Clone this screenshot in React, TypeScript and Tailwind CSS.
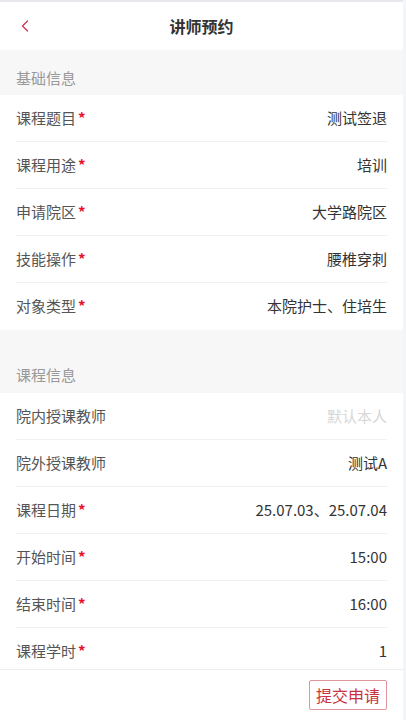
import { ChevronLeft } from 'lucide-react';

type Row = { label: string; value: string; required?: boolean; placeholder?: boolean };

const basic: Row[] = [
  { label: '课程题目', value: '测试签退', required: true },
  { label: '课程用途', value: '培训', required: true },
  { label: '申请院区', value: '大学路院区', required: true },
  { label: '技能操作', value: '腰椎穿刺', required: true },
  { label: '对象类型', value: '本院护士、住培生', required: true },
];

const course: Row[] = [
  { label: '院内授课教师', value: '默认本人', placeholder: true },
  { label: '院外授课教师', value: '测试A' },
  { label: '课程日期', value: '25.07.03、25.07.04', required: true },
  { label: '开始时间', value: '15:00', required: true },
  { label: '结束时间', value: '16:00', required: true },
  { label: '课程学时', value: '1', required: true },
];

function FormRow({ row, last }: { row: Row; last?: boolean }) {
  return (
    <div className="px-4 bg-white">
      <div
        className={`flex items-center justify-between h-[47px] ${
          last ? '' : 'border-b border-[#f0f0f0]'
        }`}
      >
        <div className="flex items-start text-[15px] text-[#555]">
          <span>{row.label}</span>
          {row.required && (
            <span className="text-[#e8112d] text-[15px] font-bold leading-none ml-[2px] mt-[3px]">*</span>
          )}
        </div>
        <span className={`text-[15px] ${row.placeholder ? 'text-[#d6d6d6]' : 'text-[#333]'}`}>{row.value}</span>
      </div>
    </div>
  );
}

export default function App() {
  return (
    <div
      className="w-[406px] h-[720px] overflow-hidden flex bg-white"
      style={{ fontFamily: '"Noto Sans CJK SC", "Noto Sans", sans-serif' }}
    >
      <div className="flex-1 flex flex-col min-w-0">
        <div className="h-[2px] bg-[#e6e8ec]" />
        {/* 顶部标题栏 */}
        <div className="relative h-[48px] flex items-center justify-center bg-white">
          <ChevronLeft size={20} strokeWidth={1.5} className="absolute left-[15px] top-[14px] text-[#d0334c]" />
          <span className="text-[16px] font-bold text-[#333]">讲师预约</span>
        </div>

        <div className="flex-1 bg-[#f7f7f7] overflow-hidden">
          <div className="h-[45px] flex items-center px-4 pt-[11px] text-[15px] text-[#999]">基础信息</div>
          {basic.map((r, i) => (
            <FormRow key={r.label} row={r} last={i === basic.length - 1} />
          ))}

          <div className="h-[63px] flex items-end px-4 pb-[7px] text-[15px] text-[#999]">课程信息</div>
          {course.map((r) => (
            <FormRow key={r.label} row={r} />
          ))}
        </div>

        {/* 底部按钮 */}
        <div className="h-[51px] shrink-0 border-t border-[#ececec] bg-white flex items-center justify-end px-4">
          <button className="h-[30px] px-[6px] border border-[#e0959d] rounded-[2px] text-[16px] text-[#c8323f] leading-none">
            提交申请
          </button>
        </div>
      </div>
      <div className="w-[3px] bg-[#f3f5f9]" />
    </div>
  );
}
